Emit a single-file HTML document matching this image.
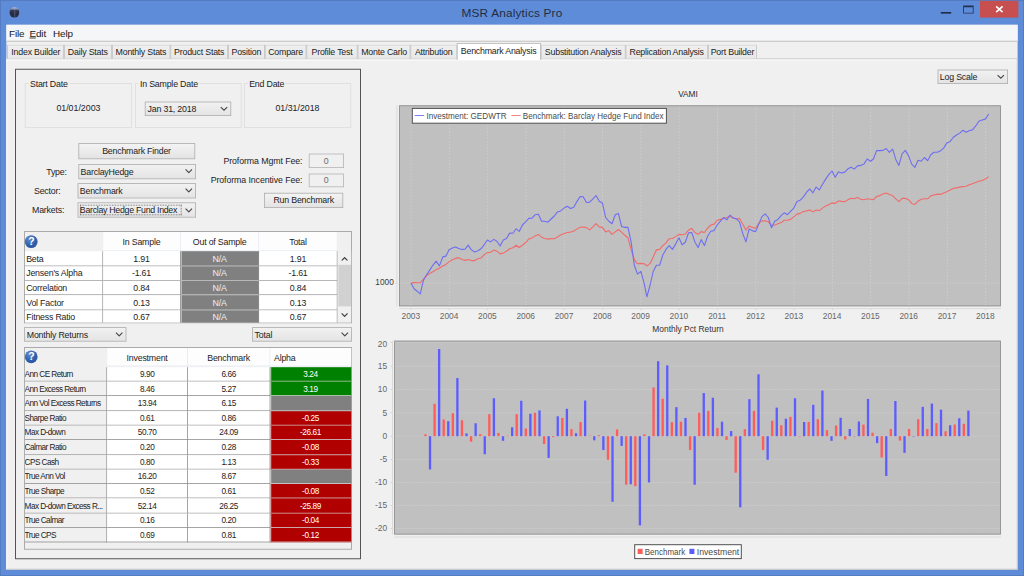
<!DOCTYPE html>
<html lang="en"><head><meta charset="utf-8"><title>MSR Analytics Pro</title>
<style>
*{box-sizing:border-box;margin:0;padding:0}
html,body{width:1024px;height:576px;overflow:hidden;background:#5f8cd8}
body{font-family:"Liberation Sans",sans-serif;color:#111}
#win{position:absolute;left:0;top:0;width:1280px;height:720px;transform:scale(.8);transform-origin:0 0;background:#5f8cd8;overflow:hidden}
#win div,#win span,#win button,#win svg{position:absolute}
.t{font-size:11px;letter-spacing:-.25px;white-space:nowrap;line-height:14px;color:#1c1c1c}
.s{font-size:10.3px;letter-spacing:-.5px;white-space:nowrap;line-height:14px;color:#1c1c1c}
.c{text-align:center}
.r{text-align:right}
#frame{left:0;top:0;width:1280px;height:720px;border:1px solid #5079bf}
#client{background:#f0f0f0}
#menubar{background:#f5f6f7;border-bottom:1px solid #b4b4b4}
.menu u{text-decoration-thickness:.9px;text-underline-offset:1.2px}
.menu{font-size:12.4px;letter-spacing:-.15px;line-height:16px;white-space:nowrap;color:#202020}
#title{font-size:14.8px;letter-spacing:.22px;line-height:18px;white-space:nowrap;color:#232c44;text-align:center}
.tab{background:linear-gradient(#efefef,#e8e8e8);border:1px solid #c2c2c2;border-top-color:#d6d6d6;border-bottom:none}
.tab.sel{background:#fff;border-color:#b4b4b4;border-top-color:#b4b4b4}
.tab span{left:0;right:0;text-align:center}
#pane{border:1px solid #c6c6c6;border-right-color:#b9b9b9;border-bottom-color:#b9b9b9;border-left-color:#fcfcfc;background:#f0f0f0;box-shadow:inset 0 1.6px 0 #fbfbfb}
#panel{border:1px solid #2e2e2e}
.grp{border:1px solid #dcdcdc}
.grp .lbl{background:#f0f0f0;padding:0 2px}
.combo{border:1px solid #acacac;background:linear-gradient(#f1f1f1,#e4e4e4)}
.combo .t{left:3px;top:50%;margin-top:-7px}
.combo svg{right:3px;top:50%;margin-top:-3px;width:10px;height:6px}
.btn{border:1px solid #acacac;background:linear-gradient(#f3f3f3,#e3e3e3);font-family:"Liberation Sans",sans-serif}
.btn span{left:0;right:0;top:50%;margin-top:-7px;text-align:center}
.field{border:1px solid #b5b5b5;background:#f0f0f0}
.field span{left:0;right:0;top:50%;margin-top:-7px;text-align:center;color:#6d6d6d}
.tbl{border:1px solid #9a9a9a;background:#f0f0f0;overflow:hidden}
.cell{border-right:1px solid #8f8f8f;border-bottom:1px solid #8f8f8f;background:#fff;overflow:hidden}
.cell span{left:0;right:0;top:50%;margin-top:-7px}
.cell span.s{margin-top:-6.2px}
.hd{background:#fdfdfe;border-right:1px solid #e3e9f1;border-bottom:1px solid #e3e9f1}
.hd span{left:0;right:0;top:50%;margin-top:-6.2px;text-align:center}
.na,.g,.rd{border-bottom-color:#d2d2d2;box-shadow:inset 1px 0 0 #dedede}
.na{background:#808080}.na span{color:#f0f0f0}
.g{background:#008000}.g span{color:#fff}
.rd{background:#b00000}.rd span{color:#fff}
.lab{background:#f0f0f0}
.q{border-radius:50%;background:radial-gradient(circle at 35% 28%,#5f8acb,#2f5eab 55%,#25509a);color:#fff;font-weight:bold;font-size:13px;line-height:16px;text-align:center}
</style></head>
<body>
<div id="win">
<div id="frame"></div>
<div id="appicon" style="left:11.75px;top:9.25px;width:12.5px;height:12.75px;border-radius:50%;background:linear-gradient(#b9bdd6 0,#8f94b3 14%,#4a5070 30%,#2b304b 45%,#23283f 100%);overflow:hidden"><div style="left:50%;top:0;width:1px;height:100%;background:rgba(190,200,225,.35)"></div><div style="left:0;top:28%;width:100%;height:1px;background:rgba(20,25,45,.5)"></div></div>
<div id="title" style="left:515px;top:7px;width:250px">MSR Analytics Pro</div>
<div id="min" style="left:1176.38px;top:14.62px;width:12.37px;height:2.13px;background:#1f2a44"></div>
<div id="max" style="left:1204.12px;top:6.62px;width:12.88px;height:10.25px;border:1px solid #22304f;border-top-width:2.6px"></div>
<div id="close" style="left:1225px;top:1px;width:48.25px;height:21.25px;background:#c84f4f"><svg viewBox="0 0 10 8.6" style="left:50%;top:50%;width:10.4px;height:8.9px;margin:-4.2px 0 0 -5.6px"><path d="M1.1 .8L8.9 7.8M8.9 .8L1.1 7.8" stroke="#fff" stroke-width="2" fill="none"/></svg></div>
<div id="client" style="left:8px;top:31px;width:1264.25px;height:681px;"></div>
<div id="menubar" style="left:8px;top:31px;width:1264.25px;height:21px;"></div>
<span class="menu" style="left:11.25px;top:33.62px">File</span>
<span class="menu" style="left:36.75px;top:33.62px"><u>E</u>dit</span>
<span class="menu" style="left:66.25px;top:33.62px">Help</span>
<div id="pane" style="left:8px;top:72.5px;width:1264.25px;height:639.5px;"></div>
<div class="tab" style="left:9.38px;top:55.75px;width:70.62px;height:17.5px;"><span class="t" style="top:1.38px">Index Builder</span></div>
<div class="tab" style="left:80px;top:55.75px;width:59.5px;height:17.5px;"><span class="t" style="top:1.38px">Daily Stats</span></div>
<div class="tab" style="left:139.5px;top:55.75px;width:73.38px;height:17.5px;"><span class="t" style="top:1.38px">Monthly Stats</span></div>
<div class="tab" style="left:212.88px;top:55.75px;width:72.25px;height:17.5px;"><span class="t" style="top:1.38px">Product Stats</span></div>
<div class="tab" style="left:285.12px;top:55.75px;width:45.63px;height:17.5px;"><span class="t" style="top:1.38px">Position</span></div>
<div class="tab" style="left:330.75px;top:55.75px;width:52.5px;height:17.5px;"><span class="t" style="top:1.38px">Compare</span></div>
<div class="tab" style="left:383.25px;top:55.75px;width:63.5px;height:17.5px;"><span class="t" style="top:1.38px">Profile Test</span></div>
<div class="tab" style="left:446.75px;top:55.75px;width:66.63px;height:17.5px;"><span class="t" style="top:1.38px">Monte Carlo</span></div>
<div class="tab" style="left:513.38px;top:55.75px;width:57.38px;height:17.5px;"><span class="t" style="top:1.38px">Attribution</span></div>
<div class="tab sel" style="left:570.75px;top:54.12px;width:105px;height:20.62px;"><span class="t" style="top:2.12px">Benchmark Analysis</span></div>
<div class="tab" style="left:675.75px;top:55.75px;width:106.25px;height:17.5px;"><span class="t" style="top:1.38px">Substitution Analysis</span></div>
<div class="tab" style="left:782px;top:55.75px;width:102.63px;height:17.5px;"><span class="t" style="top:1.38px">Replication Analysis</span></div>
<div class="tab" style="left:884.62px;top:55.75px;width:61.88px;height:17.5px;"><span class="t" style="top:1.38px">Port Builder</span></div>
<div id="panel" style="left:19.12px;top:86px;width:432px;height:613.25px;"></div>
<div class="grp" style="left:31.25px;top:104.25px;width:133.5px;height:55.25px;"><span class="t lbl" style="left:3.25px;top:-7.12px">Start Date</span><span class="t c" style="left:0;right:0;top:22.25px;letter-spacing:0">01/01/2003</span></div>
<div class="grp" style="left:168.75px;top:104.25px;width:132.75px;height:55.25px;"><span class="t lbl" style="left:3.25px;top:-7.12px">In Sample Date</span></div>
<div class="grp" style="left:305.25px;top:104.25px;width:133.25px;height:55.25px;"><span class="t lbl" style="left:3.25px;top:-7.12px">End Date</span><span class="t c" style="left:0;right:0;top:22.25px;letter-spacing:0">01/31/2018</span></div>
<div class="combo" style="left:181.25px;top:126.75px;width:107.5px;height:18px;"><span class="t" style="left:2.25px;top:1.25px;margin:0">Jan 31, 2018</span><svg viewBox="0 0 10 6"><path d="M1 .8L5 4.8L9 .8" stroke="#484848" stroke-width="1.4" fill="none"/></svg></div>
<button class="btn" style="left:97.5px;top:179px;width:146.25px;height:19.5px;"><span class="t">Benchmark Finder</span></button>
<span class="t" style="left:57.75px;top:208.25px">Type:</span>
<div class="combo" style="left:97.5px;top:205.25px;width:147.5px;height:18.25px;"><span class="t" style="left:2.25px;top:1.38px;margin:0">BarclayHedge</span><svg viewBox="0 0 10 6"><path d="M1 .8L5 4.8L9 .8" stroke="#484848" stroke-width="1.4" fill="none"/></svg></div>
<span class="t" style="left:42.5px;top:231.25px">Sector:</span>
<div class="combo" style="left:96.5px;top:229px;width:148.5px;height:18.5px;"><span class="t" style="left:2.25px;top:1.50px;margin:0">Benchmark</span><svg viewBox="0 0 10 6"><path d="M1 .8L5 4.8L9 .8" stroke="#484848" stroke-width="1.4" fill="none"/></svg></div>
<span class="t" style="left:40px;top:254.63px">Markets:</span>
<div class="combo" style="left:96.5px;top:253px;width:148.5px;height:19px;"><div style="left:2px;top:2px;bottom:2px;right:17.25px;border:1px dotted #555"></div><span class="t" style="left:2.25px;top:0.87px;margin:0"><span style="position:static;letter-spacing:-.36px">Barclay Hedge Fund Index</span></span><svg viewBox="0 0 10 6"><path d="M1 .8L5 4.8L9 .8" stroke="#484848" stroke-width="1.4" fill="none"/></svg></div>
<span class="t r" style="left:250px;width:128px;top:193.75px;letter-spacing:-.12px">Proforma Mgmt Fee:</span>
<span class="t r" style="left:250px;width:128px;top:218.38px;letter-spacing:-.12px">Proforma Incentive Fee:</span>
<div class="field" style="left:385.75px;top:192px;width:44px;height:17.5px;"><span class="t">0</span></div>
<div class="field" style="left:385.75px;top:216.5px;width:44px;height:17.5px;"><span class="t">0</span></div>
<button class="btn" style="left:330px;top:241.25px;width:99.25px;height:18.25px;"><span class="t">Run Benchmark</span></button>
<div class="tbl" style="left:30.25px;top:289.25px;width:410px;height:114.25px;">
<div class="hd" style="left:97.5px;top:-0.25px;width:97.12px;height:23.75px;"><span class="t c" style="">In Sample</span></div>
<div class="hd" style="left:194.62px;top:-0.25px;width:98.37px;height:23.75px;"><span class="t c" style="">Out of Sample</span></div>
<div class="hd" style="left:293px;top:-0.25px;width:97.5px;height:23.75px;"><span class="t c" style="">Total</span></div>
<div class="q" style="left:-0.12px;top:3.87px;width:16px;height:16px;">?</div>
<div class="cell" style="left:-0.5px;top:23.75px;width:98px;height:18.8px;"><span class="t" style="padding-left:2px">Beta</span></div>
<div class="cell" style="left:97.5px;top:23.75px;width:97.12px;height:18.8px;"><span class="t c" style="">1.91</span></div>
<div class="cell na" style="left:194.62px;top:23.75px;width:98.37px;height:18.8px;"><span class="t c" style="">N/A</span></div>
<div class="cell" style="left:293px;top:23.75px;width:97.5px;height:18.8px;"><span class="t c" style="">1.91</span></div>
<div class="cell" style="left:-0.5px;top:42.55px;width:98px;height:18.3px;"><span class="t" style="padding-left:2px">Jensen's Alpha</span></div>
<div class="cell" style="left:97.5px;top:42.55px;width:97.12px;height:18.3px;"><span class="t c" style="">-1.61</span></div>
<div class="cell na" style="left:194.62px;top:42.55px;width:98.37px;height:18.3px;"><span class="t c" style="">N/A</span></div>
<div class="cell" style="left:293px;top:42.55px;width:97.5px;height:18.3px;"><span class="t c" style="">-1.61</span></div>
<div class="cell" style="left:-0.5px;top:60.85px;width:98px;height:18.3px;"><span class="t" style="padding-left:2px">Correlation</span></div>
<div class="cell" style="left:97.5px;top:60.85px;width:97.12px;height:18.3px;"><span class="t c" style="">0.84</span></div>
<div class="cell na" style="left:194.62px;top:60.85px;width:98.37px;height:18.3px;"><span class="t c" style="">N/A</span></div>
<div class="cell" style="left:293px;top:60.85px;width:97.5px;height:18.3px;"><span class="t c" style="">0.84</span></div>
<div class="cell" style="left:-0.5px;top:79.15px;width:98px;height:18.3px;"><span class="t" style="padding-left:2px">Vol Factor</span></div>
<div class="cell" style="left:97.5px;top:79.15px;width:97.12px;height:18.3px;"><span class="t c" style="">0.13</span></div>
<div class="cell na" style="left:194.62px;top:79.15px;width:98.37px;height:18.3px;"><span class="t c" style="">N/A</span></div>
<div class="cell" style="left:293px;top:79.15px;width:97.5px;height:18.3px;"><span class="t c" style="">0.13</span></div>
<div class="cell" style="left:-0.5px;top:97.45px;width:98px;height:18.3px;"><span class="t" style="padding-left:2px">Fitness Ratio</span></div>
<div class="cell" style="left:97.5px;top:97.45px;width:97.12px;height:18.3px;"><span class="t c" style="">0.67</span></div>
<div class="cell na" style="left:194.62px;top:97.45px;width:98.37px;height:18.3px;"><span class="t c" style="">N/A</span></div>
<div class="cell" style="left:293px;top:97.45px;width:97.5px;height:18.3px;"><span class="t c" style="">0.67</span></div>
<div id="sb1" style="left:390.25px;top:23.5px;width:18.75px;height:89.75px;background:#f0f0f0"><div style="left:1px;top:17.25px;width:16px;height:51.75px;background:#d1d1d1"></div><svg viewBox="0 0 10 6" style="left:4.5px;top:7px;width:9.5px;height:5.5px;"><path d="M1 5.2L5 1.2L9 5.2" stroke="#404040" stroke-width="1.7" fill="none"/></svg><svg viewBox="0 0 10 6" style="left:4.5px;top:77.25px;width:9.5px;height:5.5px;"><path d="M1 .8L5 4.8L9 .8" stroke="#404040" stroke-width="1.7" fill="none"/></svg></div>
</div>
<div class="combo" style="left:30.25px;top:409.25px;width:128px;height:17.75px;"><span class="t" style="left:2.25px;top:1.13px;margin:0">Monthly Returns</span><svg viewBox="0 0 10 6"><path d="M1 .8L5 4.8L9 .8" stroke="#484848" stroke-width="1.4" fill="none"/></svg></div>
<div class="combo" style="left:315px;top:409.25px;width:125.25px;height:18px;"><span class="t" style="left:2.25px;top:1.25px;margin:0">Total</span><svg viewBox="0 0 10 6"><path d="M1 .8L5 4.8L9 .8" stroke="#484848" stroke-width="1.4" fill="none"/></svg></div>
<div class="tbl" style="left:30.25px;top:433.75px;width:410px;height:253px;">
<div class="hd" style="left:102.5px;top:-0.25px;width:101.25px;height:23.75px;"><span class="t c" style="">Investment</span></div>
<div class="hd" style="left:203.75px;top:-0.25px;width:102.5px;height:23.75px;"><span class="t c" style="">Benchmark</span></div>
<div class="hd" style="left:306.25px;top:-0.25px;width:102.25px;height:23.75px;"><span class="t" style="padding-left:5px;text-align:left">Alpha</span></div>
<div class="q" style="left:-0.12px;top:3.5px;width:16px;height:16px;">?</div>
<div class="cell lab" style="left:-0.5px;top:24px;width:103px;height:18.3px;"><span class="s" style="padding-left:0;letter-spacing:-.7px">Ann CE Return</span></div>
<div class="cell" style="left:102.5px;top:24px;width:101.25px;height:18.3px;"><span class="s c" style="">9.90</span></div>
<div class="cell" style="left:203.75px;top:24px;width:102.5px;height:18.3px;"><span class="s c" style="">6.66</span></div>
<div class="cell g" style="left:306.25px;top:24px;width:102.25px;height:18.3px;"><span class="s c" style="">3.24</span></div>
<div class="cell lab" style="left:-0.5px;top:42.3px;width:103px;height:18.3px;"><span class="s" style="padding-left:0;letter-spacing:-.7px">Ann Excess Return</span></div>
<div class="cell" style="left:102.5px;top:42.3px;width:101.25px;height:18.3px;"><span class="s c" style="">8.46</span></div>
<div class="cell" style="left:203.75px;top:42.3px;width:102.5px;height:18.3px;"><span class="s c" style="">5.27</span></div>
<div class="cell g" style="left:306.25px;top:42.3px;width:102.25px;height:18.3px;"><span class="s c" style="">3.19</span></div>
<div class="cell lab" style="left:-0.5px;top:60.6px;width:103px;height:18.3px;"><span class="s" style="padding-left:0;letter-spacing:-.7px">Ann Vol Excess Returns</span></div>
<div class="cell" style="left:102.5px;top:60.6px;width:101.25px;height:18.3px;"><span class="s c" style="">13.94</span></div>
<div class="cell" style="left:203.75px;top:60.6px;width:102.5px;height:18.3px;"><span class="s c" style="">6.15</span></div>
<div class="cell na" style="left:306.25px;top:60.6px;width:102.25px;height:18.3px;"><span class="s c" style=""></span></div>
<div class="cell lab" style="left:-0.5px;top:78.9px;width:103px;height:18.3px;"><span class="s" style="padding-left:0;letter-spacing:-.7px">Sharpe Ratio</span></div>
<div class="cell" style="left:102.5px;top:78.9px;width:101.25px;height:18.3px;"><span class="s c" style="">0.61</span></div>
<div class="cell" style="left:203.75px;top:78.9px;width:102.5px;height:18.3px;"><span class="s c" style="">0.86</span></div>
<div class="cell rd" style="left:306.25px;top:78.9px;width:102.25px;height:18.3px;"><span class="s c" style="">-0.25</span></div>
<div class="cell lab" style="left:-0.5px;top:97.2px;width:103px;height:18.3px;"><span class="s" style="padding-left:0;letter-spacing:-.7px">Max D-down</span></div>
<div class="cell" style="left:102.5px;top:97.2px;width:101.25px;height:18.3px;"><span class="s c" style="">50.70</span></div>
<div class="cell" style="left:203.75px;top:97.2px;width:102.5px;height:18.3px;"><span class="s c" style="">24.09</span></div>
<div class="cell rd" style="left:306.25px;top:97.2px;width:102.25px;height:18.3px;"><span class="s c" style="">-26.61</span></div>
<div class="cell lab" style="left:-0.5px;top:115.5px;width:103px;height:18.3px;"><span class="s" style="padding-left:0;letter-spacing:-.7px">Calmar Ratio</span></div>
<div class="cell" style="left:102.5px;top:115.5px;width:101.25px;height:18.3px;"><span class="s c" style="">0.20</span></div>
<div class="cell" style="left:203.75px;top:115.5px;width:102.5px;height:18.3px;"><span class="s c" style="">0.28</span></div>
<div class="cell rd" style="left:306.25px;top:115.5px;width:102.25px;height:18.3px;"><span class="s c" style="">-0.08</span></div>
<div class="cell lab" style="left:-0.5px;top:133.8px;width:103px;height:18.3px;"><span class="s" style="padding-left:0;letter-spacing:-.7px">CPS Cash</span></div>
<div class="cell" style="left:102.5px;top:133.8px;width:101.25px;height:18.3px;"><span class="s c" style="">0.80</span></div>
<div class="cell" style="left:203.75px;top:133.8px;width:102.5px;height:18.3px;"><span class="s c" style="">1.13</span></div>
<div class="cell rd" style="left:306.25px;top:133.8px;width:102.25px;height:18.3px;"><span class="s c" style="">-0.33</span></div>
<div class="cell lab" style="left:-0.5px;top:152.1px;width:103px;height:18.3px;"><span class="s" style="padding-left:0;letter-spacing:-.7px">True Ann Vol</span></div>
<div class="cell" style="left:102.5px;top:152.1px;width:101.25px;height:18.3px;"><span class="s c" style="">16.20</span></div>
<div class="cell" style="left:203.75px;top:152.1px;width:102.5px;height:18.3px;"><span class="s c" style="">8.67</span></div>
<div class="cell na" style="left:306.25px;top:152.1px;width:102.25px;height:18.3px;"><span class="s c" style=""></span></div>
<div class="cell lab" style="left:-0.5px;top:170.4px;width:103px;height:18.3px;"><span class="s" style="padding-left:0;letter-spacing:-.7px">True Sharpe</span></div>
<div class="cell" style="left:102.5px;top:170.4px;width:101.25px;height:18.3px;"><span class="s c" style="">0.52</span></div>
<div class="cell" style="left:203.75px;top:170.4px;width:102.5px;height:18.3px;"><span class="s c" style="">0.61</span></div>
<div class="cell rd" style="left:306.25px;top:170.4px;width:102.25px;height:18.3px;"><span class="s c" style="">-0.08</span></div>
<div class="cell lab" style="left:-0.5px;top:188.7px;width:103px;height:18.3px;"><span class="s" style="padding-left:0;letter-spacing:-.7px">Max D-down Excess R...</span></div>
<div class="cell" style="left:102.5px;top:188.7px;width:101.25px;height:18.3px;"><span class="s c" style="">52.14</span></div>
<div class="cell" style="left:203.75px;top:188.7px;width:102.5px;height:18.3px;"><span class="s c" style="">26.25</span></div>
<div class="cell rd" style="left:306.25px;top:188.7px;width:102.25px;height:18.3px;"><span class="s c" style="">-25.89</span></div>
<div class="cell lab" style="left:-0.5px;top:207px;width:103px;height:18.3px;"><span class="s" style="padding-left:0;letter-spacing:-.7px">True Calmar</span></div>
<div class="cell" style="left:102.5px;top:207px;width:101.25px;height:18.3px;"><span class="s c" style="">0.16</span></div>
<div class="cell" style="left:203.75px;top:207px;width:102.5px;height:18.3px;"><span class="s c" style="">0.20</span></div>
<div class="cell rd" style="left:306.25px;top:207px;width:102.25px;height:18.3px;"><span class="s c" style="">-0.04</span></div>
<div class="cell lab" style="left:-0.5px;top:225.3px;width:103px;height:18.3px;"><span class="s" style="padding-left:0;letter-spacing:-.7px">True CPS</span></div>
<div class="cell" style="left:102.5px;top:225.3px;width:101.25px;height:18.3px;"><span class="s c" style="">0.69</span></div>
<div class="cell" style="left:203.75px;top:225.3px;width:102.5px;height:18.3px;"><span class="s c" style="">0.81</span></div>
<div class="cell rd" style="left:306.25px;top:225.3px;width:102.25px;height:18.3px;"><span class="s c" style="">-0.12</span></div>
</div>
<div class="combo" style="left:1171.5px;top:86.75px;width:88.75px;height:18px;"><span class="t" style="left:2.25px;top:1.25px;margin:0">Log Scale</span><svg viewBox="0 0 10 6"><path d="M1 .8L5 4.8L9 .8" stroke="#484848" stroke-width="1.4" fill="none"/></svg></div>
<svg id="charts" viewBox="368 84 656 488" style="left:460px;top:105px;width:820px;height:610px;" font-family="Liberation Sans, sans-serif">
<rect x="399.0" y="105.4" width="602.0" height="200.9" fill="#c0c0c0"/>
<line x1="411.10" y1="105.4" x2="411.10" y2="306.3" stroke="#d2d2d2" stroke-width=".7" stroke-dasharray="1.6 1.6"/>
<line x1="449.40" y1="105.4" x2="449.40" y2="306.3" stroke="#d2d2d2" stroke-width=".7" stroke-dasharray="1.6 1.6"/>
<line x1="487.70" y1="105.4" x2="487.70" y2="306.3" stroke="#d2d2d2" stroke-width=".7" stroke-dasharray="1.6 1.6"/>
<line x1="526.00" y1="105.4" x2="526.00" y2="306.3" stroke="#d2d2d2" stroke-width=".7" stroke-dasharray="1.6 1.6"/>
<line x1="564.30" y1="105.4" x2="564.30" y2="306.3" stroke="#d2d2d2" stroke-width=".7" stroke-dasharray="1.6 1.6"/>
<line x1="602.60" y1="105.4" x2="602.60" y2="306.3" stroke="#d2d2d2" stroke-width=".7" stroke-dasharray="1.6 1.6"/>
<line x1="640.90" y1="105.4" x2="640.90" y2="306.3" stroke="#d2d2d2" stroke-width=".7" stroke-dasharray="1.6 1.6"/>
<line x1="679.20" y1="105.4" x2="679.20" y2="306.3" stroke="#d2d2d2" stroke-width=".7" stroke-dasharray="1.6 1.6"/>
<line x1="717.50" y1="105.4" x2="717.50" y2="306.3" stroke="#d2d2d2" stroke-width=".7" stroke-dasharray="1.6 1.6"/>
<line x1="755.80" y1="105.4" x2="755.80" y2="306.3" stroke="#d2d2d2" stroke-width=".7" stroke-dasharray="1.6 1.6"/>
<line x1="794.10" y1="105.4" x2="794.10" y2="306.3" stroke="#d2d2d2" stroke-width=".7" stroke-dasharray="1.6 1.6"/>
<line x1="832.40" y1="105.4" x2="832.40" y2="306.3" stroke="#d2d2d2" stroke-width=".7" stroke-dasharray="1.6 1.6"/>
<line x1="870.70" y1="105.4" x2="870.70" y2="306.3" stroke="#d2d2d2" stroke-width=".7" stroke-dasharray="1.6 1.6"/>
<line x1="909.00" y1="105.4" x2="909.00" y2="306.3" stroke="#d2d2d2" stroke-width=".7" stroke-dasharray="1.6 1.6"/>
<line x1="947.30" y1="105.4" x2="947.30" y2="306.3" stroke="#d2d2d2" stroke-width=".7" stroke-dasharray="1.6 1.6"/>
<line x1="985.60" y1="105.4" x2="985.60" y2="306.3" stroke="#d2d2d2" stroke-width=".7" stroke-dasharray="1.6 1.6"/>
<line x1="399.0" y1="283" x2="1001.0" y2="283" stroke="#d2d2d2" stroke-width=".7" stroke-dasharray="1.6 1.6"/>
<polyline points="410.9,283.1 414.1,282.6 417.2,282.8 420.2,282.6 423.4,279.4 426.6,275.6 430.0,273.2 433.2,271.5 436.2,269.6 439.4,268.3 442.8,265.9 445.9,264.4 449.1,261.9 452.3,259.7 455.5,258.4 458.7,257.6 461.9,259.5 465.1,260.4 468.2,259.5 471.4,260.6 474.6,260.6 477.8,258.8 481.0,258.0 484.2,254.6 487.4,252.6 490.6,252.2 493.8,250.1 496.9,251.2 500.1,253.9 503.3,253.1 506.5,251.2 509.7,248.8 512.9,247.7 516.1,245.2 519.2,247.5 522.4,245.2 525.6,242.8 528.8,238.9 532.0,237.9 535.2,235.9 538.4,234.4 541.6,237.2 544.8,238.5 547.9,239.1 551.1,238.5 554.3,238.7 557.5,237.0 560.7,234.9 564.4,233.4 567.2,232.5 570.6,232.1 573.8,231.0 576.9,229.1 580.1,227.2 583.3,227.1 586.5,227.6 589.7,229.9 592.9,226.9 596.1,223.7 599.2,226.9 602.4,227.4 605.6,231.9 608.8,230.6 612.0,234.4 615.2,231.9 618.4,229.5 621.6,232.1 624.8,235.3 627.9,237.8 631.1,249.4 634.3,259.7 637.5,263.8 640.9,263.4 644.1,263.8 646.9,265.9 650.1,263.4 653.2,256.9 656.4,249.9 659.6,249.4 662.8,245.6 666.0,242.8 669.2,238.7 672.4,238.5 675.6,236.6 678.9,234.4 682.1,234.8 685.3,234.0 688.5,230.1 691.7,228.4 694.9,232.5 698.1,234.4 701.2,231.6 704.4,232.5 707.6,228.2 710.8,225.0 714.0,224.1 717.2,220.3 720.4,219.4 723.6,218.4 726.8,217.5 729.9,216.2 733.1,217.9 736.3,219.0 739.5,218.4 742.7,224.1 745.9,230.1 749.1,225.9 752.2,227.4 755.6,228.2 758.8,223.1 761.9,220.9 765.1,220.7 768.3,221.8 771.5,225.6 774.7,225.0 777.9,223.7 781.1,222.6 784.2,220.3 787.4,220.3 790.6,219.4 793.8,216.9 797.0,214.1 800.2,213.4 803.4,211.5 806.6,210.9 809.8,210.0 812.9,211.9 816.1,210.0 819.3,210.6 822.5,208.1 825.7,205.9 828.9,204.6 832.0,202.9 835.2,203.4 838.4,201.0 841.6,201.4 844.8,201.6 847.9,199.7 851.1,198.2 854.3,198.8 857.5,197.4 860.7,199.3 863.9,199.7 867.1,198.8 870.6,199.3 873.4,199.7 876.6,196.5 879.8,195.6 883.0,194.1 886.2,193.1 889.4,194.6 892.6,195.6 895.8,198.8 898.9,201.6 902.1,198.4 905.3,198.2 908.5,199.7 911.7,203.4 914.9,204.4 918.1,201.2 921.2,199.3 924.4,198.8 927.6,198.8 930.8,195.9 934.0,195.0 937.2,194.1 940.4,194.4 943.6,193.1 946.9,191.8 950.1,189.9 953.3,188.4 956.5,187.9 959.7,187.1 962.9,186.6 966.1,186.2 969.2,184.7 972.4,183.8 975.6,182.4 978.8,181.3 982.0,180.6 985.4,179.1 988.6,176.6" fill="none" stroke="#f26a6a" stroke-width="1.1" stroke-linejoin="round"/>
<polyline points="410.9,283.1 414.1,288.8 417.2,291.2 420.2,293.8 423.4,280.3 426.6,274.7 430.0,269.6 433.2,264.8 436.2,261.2 439.4,265.9 442.8,256.9 445.9,256.1 449.1,249.8 452.3,248.1 455.5,246.9 458.7,248.4 461.9,249.4 465.1,249.2 468.2,245.1 471.4,249.9 474.6,252.0 477.8,250.7 481.0,248.8 484.2,244.7 487.4,240.0 490.6,241.9 493.8,239.4 496.9,241.3 500.1,246.0 503.3,240.0 506.5,238.5 509.7,233.1 512.9,233.2 516.1,228.8 519.2,231.4 522.4,225.0 525.6,221.8 528.8,218.4 532.0,218.2 535.2,214.7 538.4,214.3 541.6,221.2 544.8,221.2 547.9,222.2 551.1,219.0 554.3,216.0 557.5,211.9 560.7,210.9 564.4,207.8 567.2,206.2 570.6,208.5 573.8,207.2 576.9,201.6 580.1,196.5 583.3,196.9 586.5,202.5 589.7,202.1 592.9,198.8 596.1,195.6 599.2,201.2 602.4,202.9 605.6,217.5 608.8,221.2 612.0,223.7 615.2,214.7 618.4,213.4 621.6,226.5 624.8,227.4 627.9,227.2 631.1,241.9 634.3,265.3 637.5,274.1 640.9,271.3 644.1,283.1 646.9,296.8 650.1,285.0 653.2,271.5 656.4,265.3 659.6,265.3 662.8,255.0 666.0,249.4 669.2,245.6 672.4,249.4 675.6,244.1 678.9,237.8 682.1,244.7 685.3,242.2 688.5,232.9 691.7,232.5 694.9,241.9 698.1,247.5 701.2,239.6 704.4,245.6 707.6,236.2 710.8,231.2 714.0,230.6 717.2,225.0 720.4,221.2 723.6,217.5 726.8,219.9 729.9,215.2 733.1,217.9 736.3,218.8 739.5,221.8 742.7,233.4 745.9,241.9 749.1,229.1 752.2,230.6 755.6,231.6 758.8,224.1 761.9,216.6 765.1,213.8 768.3,217.5 771.5,227.8 774.7,221.2 777.9,219.4 781.1,215.6 784.2,212.8 787.4,214.7 790.6,211.3 793.8,208.1 797.0,201.6 800.2,200.2 803.4,196.9 806.6,192.2 809.8,189.0 812.9,192.8 816.1,187.1 819.3,189.9 822.5,184.3 825.7,179.1 828.9,174.4 832.0,171.0 835.2,177.2 838.4,171.9 841.6,172.9 844.8,172.1 847.9,168.8 851.1,167.2 854.3,169.1 857.5,165.9 860.7,165.4 863.9,164.1 867.1,159.0 870.6,161.2 873.4,159.0 876.6,150.6 879.8,150.6 883.0,150.4 886.2,148.5 889.4,152.4 892.6,149.1 895.8,159.4 898.9,165.4 902.1,153.8 905.3,150.4 908.5,155.6 911.7,164.1 914.9,167.4 918.1,160.3 921.2,161.2 924.4,157.5 927.6,160.7 930.8,154.7 934.0,152.2 937.2,152.2 940.4,150.9 943.6,148.1 946.9,142.9 950.1,141.6 953.3,137.2 956.5,135.0 959.7,133.1 962.9,130.3 966.1,132.2 969.2,130.7 972.4,129.9 975.6,126.2 978.8,121.3 982.0,120.0 985.4,119.1 988.6,114.0" fill="none" stroke="#6e6ef2" stroke-width="1.1" stroke-linejoin="round"/>
<rect x="399.4" y="105.80000000000001" width="601.2" height="200.1" fill="none" stroke="#8c8c8c" stroke-width=".8"/>
<line x1="399.0" y1="308.6" x2="1001.0" y2="308.6" stroke="#dadada" stroke-width="1"/>
<line x1="396.9" y1="105.4" x2="396.9" y2="306.3" stroke="#dadada" stroke-width="1"/>
<line x1="411.10" y1="308.4" x2="411.10" y2="310.2" stroke="#d0d0d0" stroke-width=".8"/>
<text x="410.80" y="319.2" font-size="8.4" text-anchor="middle" fill="#666">2003</text>
<line x1="449.40" y1="308.4" x2="449.40" y2="310.2" stroke="#d0d0d0" stroke-width=".8"/>
<text x="449.10" y="319.2" font-size="8.4" text-anchor="middle" fill="#666">2004</text>
<line x1="487.70" y1="308.4" x2="487.70" y2="310.2" stroke="#d0d0d0" stroke-width=".8"/>
<text x="487.40" y="319.2" font-size="8.4" text-anchor="middle" fill="#666">2005</text>
<line x1="526.00" y1="308.4" x2="526.00" y2="310.2" stroke="#d0d0d0" stroke-width=".8"/>
<text x="525.70" y="319.2" font-size="8.4" text-anchor="middle" fill="#666">2006</text>
<line x1="564.30" y1="308.4" x2="564.30" y2="310.2" stroke="#d0d0d0" stroke-width=".8"/>
<text x="564.00" y="319.2" font-size="8.4" text-anchor="middle" fill="#666">2007</text>
<line x1="602.60" y1="308.4" x2="602.60" y2="310.2" stroke="#d0d0d0" stroke-width=".8"/>
<text x="602.30" y="319.2" font-size="8.4" text-anchor="middle" fill="#666">2008</text>
<line x1="640.90" y1="308.4" x2="640.90" y2="310.2" stroke="#d0d0d0" stroke-width=".8"/>
<text x="640.60" y="319.2" font-size="8.4" text-anchor="middle" fill="#666">2009</text>
<line x1="679.20" y1="308.4" x2="679.20" y2="310.2" stroke="#d0d0d0" stroke-width=".8"/>
<text x="678.90" y="319.2" font-size="8.4" text-anchor="middle" fill="#666">2010</text>
<line x1="717.50" y1="308.4" x2="717.50" y2="310.2" stroke="#d0d0d0" stroke-width=".8"/>
<text x="717.20" y="319.2" font-size="8.4" text-anchor="middle" fill="#666">2011</text>
<line x1="755.80" y1="308.4" x2="755.80" y2="310.2" stroke="#d0d0d0" stroke-width=".8"/>
<text x="755.50" y="319.2" font-size="8.4" text-anchor="middle" fill="#666">2012</text>
<line x1="794.10" y1="308.4" x2="794.10" y2="310.2" stroke="#d0d0d0" stroke-width=".8"/>
<text x="793.80" y="319.2" font-size="8.4" text-anchor="middle" fill="#666">2013</text>
<line x1="832.40" y1="308.4" x2="832.40" y2="310.2" stroke="#d0d0d0" stroke-width=".8"/>
<text x="832.10" y="319.2" font-size="8.4" text-anchor="middle" fill="#666">2014</text>
<line x1="870.70" y1="308.4" x2="870.70" y2="310.2" stroke="#d0d0d0" stroke-width=".8"/>
<text x="870.40" y="319.2" font-size="8.4" text-anchor="middle" fill="#666">2015</text>
<line x1="909.00" y1="308.4" x2="909.00" y2="310.2" stroke="#d0d0d0" stroke-width=".8"/>
<text x="908.70" y="319.2" font-size="8.4" text-anchor="middle" fill="#666">2016</text>
<line x1="947.30" y1="308.4" x2="947.30" y2="310.2" stroke="#d0d0d0" stroke-width=".8"/>
<text x="947.00" y="319.2" font-size="8.4" text-anchor="middle" fill="#666">2017</text>
<line x1="985.60" y1="308.4" x2="985.60" y2="310.2" stroke="#d0d0d0" stroke-width=".8"/>
<text x="985.30" y="319.2" font-size="8.4" text-anchor="middle" fill="#666">2018</text>
<text x="393.8" y="285.0" font-size="8.3" text-anchor="end" fill="#3c3c3c">1000</text>
<line x1="395.4" y1="283.4" x2="397" y2="283.4" stroke="#cfcfcf" stroke-width=".8"/>
<text x="688" y="96.6" font-size="8.3" text-anchor="middle" fill="#2a2a2a">VAMI</text>
<rect x="412.3" y="108.4" width="254.1" height="14.8" fill="#fff" stroke="#505050" stroke-width="1"/>
<line x1="414.6" y1="115.5" x2="424.2" y2="115.5" stroke="#6060fa" stroke-width=".8"/>
<text x="426.4" y="118.6" font-size="8.3" fill="#4a4a4a" textLength="80.2" lengthAdjust="spacingAndGlyphs">Investment: GEDWTR</text>
<line x1="511.4" y1="115.5" x2="520.6" y2="115.5" stroke="#fa6060" stroke-width=".8"/>
<text x="522.8" y="118.6" font-size="8.3" fill="#4a4a4a" textLength="140.8" lengthAdjust="spacingAndGlyphs">Benchmark: Barclay Hedge Fund Index</text>
<text x="688" y="332.0" font-size="8.4" text-anchor="middle" fill="#333" textLength="71.4" lengthAdjust="spacingAndGlyphs">Monthly Pct Return</text>
<rect x="394.2" y="340.7" width="606.8" height="193.8" fill="#c0c0c0"/>
<line x1="394.2" y1="342.50" x2="1001.0" y2="342.50" stroke="#d2d2d2" stroke-width=".7" stroke-dasharray="1.6 1.6"/>
<text x="387.2" y="346.80" font-size="8.4" text-anchor="end" fill="#666">20</text>
<line x1="390.4" y1="342.50" x2="392.4" y2="342.50" stroke="#d0d0d0" stroke-width=".8"/>
<line x1="394.2" y1="366.30" x2="1001.0" y2="366.30" stroke="#d2d2d2" stroke-width=".7" stroke-dasharray="1.6 1.6"/>
<text x="387.2" y="369.10" font-size="8.4" text-anchor="end" fill="#666">15</text>
<line x1="390.4" y1="366.30" x2="392.4" y2="366.30" stroke="#d0d0d0" stroke-width=".8"/>
<line x1="394.2" y1="389.50" x2="1001.0" y2="389.50" stroke="#d2d2d2" stroke-width=".7" stroke-dasharray="1.6 1.6"/>
<text x="387.2" y="392.30" font-size="8.4" text-anchor="end" fill="#666">10</text>
<line x1="390.4" y1="389.50" x2="392.4" y2="389.50" stroke="#d0d0d0" stroke-width=".8"/>
<line x1="394.2" y1="412.90" x2="1001.0" y2="412.90" stroke="#d2d2d2" stroke-width=".7" stroke-dasharray="1.6 1.6"/>
<text x="387.2" y="415.70" font-size="8.4" text-anchor="end" fill="#666">5</text>
<line x1="390.4" y1="412.90" x2="392.4" y2="412.90" stroke="#d0d0d0" stroke-width=".8"/>
<line x1="394.2" y1="436.20" x2="1001.0" y2="436.20" stroke="#d2d2d2" stroke-width=".7" stroke-dasharray="1.6 1.6"/>
<text x="387.2" y="439.00" font-size="8.4" text-anchor="end" fill="#666">0</text>
<line x1="390.4" y1="436.20" x2="392.4" y2="436.20" stroke="#d0d0d0" stroke-width=".8"/>
<line x1="394.2" y1="459.50" x2="1001.0" y2="459.50" stroke="#d2d2d2" stroke-width=".7" stroke-dasharray="1.6 1.6"/>
<text x="387.2" y="462.30" font-size="8.4" text-anchor="end" fill="#666">-5</text>
<line x1="390.4" y1="459.50" x2="392.4" y2="459.50" stroke="#d0d0d0" stroke-width=".8"/>
<line x1="394.2" y1="482.50" x2="1001.0" y2="482.50" stroke="#d2d2d2" stroke-width=".7" stroke-dasharray="1.6 1.6"/>
<text x="387.2" y="485.30" font-size="8.4" text-anchor="end" fill="#666">-10</text>
<line x1="390.4" y1="482.50" x2="392.4" y2="482.50" stroke="#d0d0d0" stroke-width=".8"/>
<line x1="394.2" y1="505.50" x2="1001.0" y2="505.50" stroke="#d2d2d2" stroke-width=".7" stroke-dasharray="1.6 1.6"/>
<text x="387.2" y="508.30" font-size="8.4" text-anchor="end" fill="#666">-15</text>
<line x1="390.4" y1="505.50" x2="392.4" y2="505.50" stroke="#d0d0d0" stroke-width=".8"/>
<line x1="394.2" y1="528.50" x2="1001.0" y2="528.50" stroke="#d2d2d2" stroke-width=".7" stroke-dasharray="1.6 1.6"/>
<text x="387.2" y="531.30" font-size="8.4" text-anchor="end" fill="#666">-20</text>
<line x1="390.4" y1="528.50" x2="392.4" y2="528.50" stroke="#d0d0d0" stroke-width=".8"/>
<rect x="424.30" y="434.32" width="2.3" height="1.88" fill="#ff5c5c"/>
<rect x="428.86" y="436.20" width="2.3" height="33.26" fill="#5c5cff"/>
<rect x="433.43" y="403.86" width="2.3" height="32.34" fill="#ff5c5c"/>
<rect x="437.99" y="349.01" width="2.3" height="87.19" fill="#5c5cff"/>
<rect x="442.55" y="419.51" width="2.3" height="16.69" fill="#ff5c5c"/>
<rect x="447.11" y="421.20" width="2.3" height="15.00" fill="#5c5cff"/>
<rect x="451.68" y="413.23" width="2.3" height="22.97" fill="#ff5c5c"/>
<rect x="456.24" y="378.07" width="2.3" height="58.12" fill="#5c5cff"/>
<rect x="460.80" y="420.26" width="2.3" height="15.94" fill="#ff5c5c"/>
<rect x="465.36" y="433.39" width="2.3" height="2.81" fill="#5c5cff"/>
<rect x="469.93" y="436.20" width="2.3" height="5.54" fill="#ff5c5c"/>
<rect x="474.49" y="423.26" width="2.3" height="12.94" fill="#5c5cff"/>
<rect x="479.05" y="434.14" width="2.3" height="2.06" fill="#ff5c5c"/>
<rect x="483.61" y="436.20" width="2.3" height="18.02" fill="#5c5cff"/>
<rect x="488.18" y="414.17" width="2.3" height="22.03" fill="#ff5c5c"/>
<rect x="492.74" y="398.23" width="2.3" height="37.97" fill="#5c5cff"/>
<rect x="497.30" y="432.92" width="2.3" height="3.28" fill="#ff5c5c"/>
<rect x="501.86" y="436.20" width="2.3" height="4.62" fill="#5c5cff"/>
<rect x="506.43" y="435.73" width="2.3" height="0.47" fill="#ff5c5c"/>
<rect x="510.99" y="427.29" width="2.3" height="8.91" fill="#5c5cff"/>
<rect x="515.55" y="414.17" width="2.3" height="22.03" fill="#ff5c5c"/>
<rect x="520.11" y="400.76" width="2.3" height="35.44" fill="#5c5cff"/>
<rect x="524.68" y="428.51" width="2.3" height="7.69" fill="#ff5c5c"/>
<rect x="529.24" y="413.70" width="2.3" height="22.50" fill="#5c5cff"/>
<rect x="533.80" y="412.76" width="2.3" height="23.44" fill="#ff5c5c"/>
<rect x="538.36" y="410.42" width="2.3" height="25.78" fill="#5c5cff"/>
<rect x="542.93" y="436.20" width="2.3" height="7.85" fill="#ff5c5c"/>
<rect x="547.49" y="436.20" width="2.3" height="21.71" fill="#5c5cff"/>
<rect x="552.05" y="436.20" width="2.3" height="0.92" fill="#ff5c5c"/>
<rect x="556.61" y="416.32" width="2.3" height="19.88" fill="#5c5cff"/>
<rect x="561.18" y="417.92" width="2.3" height="18.28" fill="#ff5c5c"/>
<rect x="565.74" y="408.82" width="2.3" height="27.38" fill="#5c5cff"/>
<rect x="570.30" y="429.17" width="2.3" height="7.03" fill="#ff5c5c"/>
<rect x="574.86" y="433.20" width="2.3" height="3.00" fill="#5c5cff"/>
<rect x="579.43" y="422.14" width="2.3" height="14.06" fill="#ff5c5c"/>
<rect x="583.99" y="400.57" width="2.3" height="35.62" fill="#5c5cff"/>
<rect x="588.55" y="435.73" width="2.3" height="0.47" fill="#ff5c5c"/>
<rect x="593.11" y="436.20" width="2.3" height="4.16" fill="#5c5cff"/>
<rect x="597.68" y="435.26" width="2.3" height="0.94" fill="#ff5c5c"/>
<rect x="602.24" y="436.20" width="2.3" height="13.86" fill="#5c5cff"/>
<rect x="606.80" y="436.20" width="2.3" height="23.56" fill="#ff5c5c"/>
<rect x="611.36" y="436.20" width="2.3" height="65.60" fill="#5c5cff"/>
<rect x="615.93" y="429.45" width="2.3" height="6.75" fill="#ff5c5c"/>
<rect x="620.49" y="436.20" width="2.3" height="9.70" fill="#5c5cff"/>
<rect x="625.05" y="436.20" width="2.3" height="48.51" fill="#ff5c5c"/>
<rect x="629.61" y="436.20" width="2.3" height="48.05" fill="#5c5cff"/>
<rect x="634.18" y="436.20" width="2.3" height="49.90" fill="#ff5c5c"/>
<rect x="638.74" y="436.20" width="2.3" height="89.17" fill="#5c5cff"/>
<rect x="643.30" y="434.32" width="2.3" height="1.88" fill="#ff5c5c"/>
<rect x="647.86" y="436.20" width="2.3" height="46.20" fill="#5c5cff"/>
<rect x="652.43" y="387.45" width="2.3" height="48.75" fill="#ff5c5c"/>
<rect x="656.99" y="361.20" width="2.3" height="75.00" fill="#5c5cff"/>
<rect x="661.55" y="398.70" width="2.3" height="37.50" fill="#ff5c5c"/>
<rect x="666.11" y="365.42" width="2.3" height="70.78" fill="#5c5cff"/>
<rect x="670.68" y="422.14" width="2.3" height="14.06" fill="#ff5c5c"/>
<rect x="675.24" y="407.14" width="2.3" height="29.06" fill="#5c5cff"/>
<rect x="679.80" y="421.67" width="2.3" height="14.53" fill="#ff5c5c"/>
<rect x="684.36" y="417.92" width="2.3" height="18.28" fill="#5c5cff"/>
<rect x="688.93" y="436.20" width="2.3" height="13.86" fill="#ff5c5c"/>
<rect x="693.49" y="436.20" width="2.3" height="48.51" fill="#5c5cff"/>
<rect x="698.05" y="412.76" width="2.3" height="23.44" fill="#ff5c5c"/>
<rect x="702.61" y="393.07" width="2.3" height="43.12" fill="#5c5cff"/>
<rect x="707.18" y="410.89" width="2.3" height="25.31" fill="#ff5c5c"/>
<rect x="711.74" y="397.76" width="2.3" height="38.44" fill="#5c5cff"/>
<rect x="716.30" y="427.95" width="2.3" height="8.25" fill="#ff5c5c"/>
<rect x="720.86" y="421.67" width="2.3" height="14.53" fill="#5c5cff"/>
<rect x="725.43" y="436.20" width="2.3" height="3.70" fill="#ff5c5c"/>
<rect x="729.99" y="431.04" width="2.3" height="5.16" fill="#5c5cff"/>
<rect x="734.55" y="436.20" width="2.3" height="36.50" fill="#ff5c5c"/>
<rect x="739.11" y="436.20" width="2.3" height="71.15" fill="#5c5cff"/>
<rect x="743.68" y="429.17" width="2.3" height="7.03" fill="#ff5c5c"/>
<rect x="748.24" y="399.17" width="2.3" height="37.03" fill="#5c5cff"/>
<rect x="752.80" y="410.89" width="2.3" height="25.31" fill="#ff5c5c"/>
<rect x="757.36" y="374.32" width="2.3" height="61.88" fill="#5c5cff"/>
<rect x="761.93" y="436.20" width="2.3" height="13.86" fill="#ff5c5c"/>
<rect x="766.49" y="436.20" width="2.3" height="23.56" fill="#5c5cff"/>
<rect x="771.05" y="420.73" width="2.3" height="15.47" fill="#ff5c5c"/>
<rect x="775.61" y="407.61" width="2.3" height="28.59" fill="#5c5cff"/>
<rect x="780.18" y="425.25" width="2.3" height="10.95" fill="#ff5c5c"/>
<rect x="784.74" y="418.72" width="2.3" height="17.48" fill="#5c5cff"/>
<rect x="789.30" y="416.86" width="2.3" height="19.34" fill="#ff5c5c"/>
<rect x="793.86" y="398.22" width="2.3" height="37.98" fill="#5c5cff"/>
<rect x="798.43" y="436.20" width="2.3" height="0.46" fill="#ff5c5c"/>
<rect x="802.99" y="421.99" width="2.3" height="14.21" fill="#5c5cff"/>
<rect x="807.55" y="421.99" width="2.3" height="14.21" fill="#ff5c5c"/>
<rect x="812.11" y="404.75" width="2.3" height="31.46" fill="#5c5cff"/>
<rect x="816.68" y="419.19" width="2.3" height="17.01" fill="#ff5c5c"/>
<rect x="821.24" y="390.53" width="2.3" height="45.67" fill="#5c5cff"/>
<rect x="825.80" y="430.14" width="2.3" height="6.06" fill="#ff5c5c"/>
<rect x="830.36" y="436.20" width="2.3" height="4.62" fill="#5c5cff"/>
<rect x="834.93" y="425.48" width="2.3" height="10.72" fill="#ff5c5c"/>
<rect x="839.49" y="417.79" width="2.3" height="18.41" fill="#5c5cff"/>
<rect x="844.05" y="436.20" width="2.3" height="3.23" fill="#ff5c5c"/>
<rect x="848.61" y="428.98" width="2.3" height="7.22" fill="#5c5cff"/>
<rect x="853.18" y="436.20" width="2.3" height="0.46" fill="#ff5c5c"/>
<rect x="857.74" y="421.52" width="2.3" height="14.68" fill="#5c5cff"/>
<rect x="862.30" y="424.55" width="2.3" height="11.65" fill="#ff5c5c"/>
<rect x="866.86" y="398.92" width="2.3" height="37.28" fill="#5c5cff"/>
<rect x="871.43" y="432.70" width="2.3" height="3.50" fill="#ff5c5c"/>
<rect x="875.99" y="436.20" width="2.3" height="6.93" fill="#5c5cff"/>
<rect x="880.55" y="436.20" width="2.3" height="21.25" fill="#ff5c5c"/>
<rect x="885.11" y="436.20" width="2.3" height="39.73" fill="#5c5cff"/>
<rect x="889.68" y="428.98" width="2.3" height="7.22" fill="#ff5c5c"/>
<rect x="894.24" y="401.02" width="2.3" height="35.18" fill="#5c5cff"/>
<rect x="898.80" y="436.20" width="2.3" height="4.39" fill="#ff5c5c"/>
<rect x="903.36" y="436.20" width="2.3" height="16.63" fill="#5c5cff"/>
<rect x="907.93" y="428.98" width="2.3" height="7.22" fill="#ff5c5c"/>
<rect x="912.49" y="436.20" width="2.3" height="0.46" fill="#5c5cff"/>
<rect x="917.05" y="419.19" width="2.3" height="17.01" fill="#ff5c5c"/>
<rect x="921.61" y="406.84" width="2.3" height="29.36" fill="#5c5cff"/>
<rect x="926.18" y="428.98" width="2.3" height="7.22" fill="#ff5c5c"/>
<rect x="930.74" y="403.58" width="2.3" height="32.62" fill="#5c5cff"/>
<rect x="935.30" y="423.15" width="2.3" height="13.05" fill="#ff5c5c"/>
<rect x="939.86" y="409.64" width="2.3" height="26.56" fill="#5c5cff"/>
<rect x="944.43" y="431.31" width="2.3" height="4.89" fill="#ff5c5c"/>
<rect x="948.99" y="425.25" width="2.3" height="10.95" fill="#5c5cff"/>
<rect x="953.55" y="424.55" width="2.3" height="11.65" fill="#ff5c5c"/>
<rect x="958.11" y="418.26" width="2.3" height="17.94" fill="#5c5cff"/>
<rect x="962.68" y="423.85" width="2.3" height="12.35" fill="#ff5c5c"/>
<rect x="967.24" y="410.57" width="2.3" height="25.63" fill="#5c5cff"/>
<rect x="394.59999999999997" y="341.09999999999997" width="606.0" height="193.0" fill="none" stroke="#8c8c8c" stroke-width=".8"/>
<line x1="394.2" y1="537" x2="1001.0" y2="537" stroke="#dadada" stroke-width="1"/>
<line x1="392.5" y1="340.7" x2="392.5" y2="534.5" stroke="#dadada" stroke-width="1"/>
<rect x="634.7" y="544.7" width="106.6" height="13.9" fill="#fff" stroke="#505050" stroke-width="1"/>
<rect x="637.6" y="548.8" width="5" height="5.2" fill="#ff5c5c"/>
<text x="644.8" y="554.6" font-size="8.3" fill="#4a4a4a" textLength="40.4" lengthAdjust="spacingAndGlyphs">Benchmark</text>
<rect x="689.4" y="548.8" width="5" height="5.2" fill="#5c5cff"/>
<text x="696.8" y="554.6" font-size="8.3" fill="#4a4a4a" textLength="42.4" lengthAdjust="spacingAndGlyphs">Investment</text>
</svg>
</div>
</body></html>
